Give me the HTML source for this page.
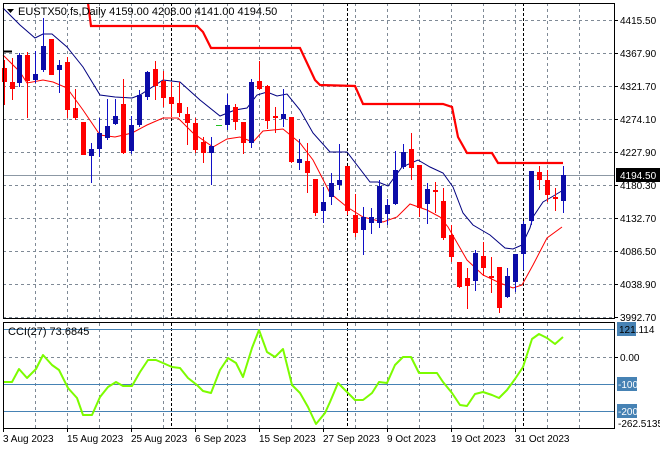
<!DOCTYPE html>
<html><head><meta charset="utf-8"><style>
html,body{margin:0;padding:0;background:#fff;width:660px;height:450px;overflow:hidden}
svg{display:block;font-family:"Liberation Sans",sans-serif}
</style></head><body>
<svg width="660" height="450" viewBox="0 0 660 450" xmlns="http://www.w3.org/2000/svg">
<rect width="660" height="450" fill="#fff"/>
<!-- grid -->
<g stroke="#7f8a96" stroke-width="1" stroke-dasharray="3,3" fill="none" shape-rendering="crispEdges">
<path d="M3 20.5H614M3 53.5H614M3 86.5H614M3 119.5H614M3 152.5H614M3 185.5H614M3 218.5H614M3 251.5H614M3 284.5H614M3 317.5H614M3 357.5H614"/>
<path d="M35.5 3V318M67.5 3V318M99.5 3V318M131.5 3V318M163.5 3V318M195.5 3V318M227.5 3V318M259.5 3V318M291.5 3V318M323.5 3V318M355.5 3V318M387.5 3V318M419.5 3V318M451.5 3V318M483.5 3V318M515.5 3V318M547.5 3V318M579.5 3V318"/>
<path d="M35.5 323V428M67.5 323V428M99.5 323V428M131.5 323V428M163.5 323V428M195.5 323V428M227.5 323V428M259.5 323V428M291.5 323V428M323.5 323V428M355.5 323V428M387.5 323V428M419.5 323V428M451.5 323V428M483.5 323V428M515.5 323V428M547.5 323V428M579.5 323V428"/>
</g>
<g stroke="#000" stroke-width="1" stroke-dasharray="3,2" shape-rendering="crispEdges">
<path d="M171.5 3V318M347.5 3V318M523.5 3V318M171.5 323V428M347.5 323V428M523.5 323V428"/>
</g>
<!-- current price line -->
<path d="M3 175.5H614" stroke="#8c98a4" stroke-width="1" shape-rendering="crispEdges"/>
<!-- supertrend -->
<polyline fill="none" stroke="#ff0000" stroke-width="2.2" points="88,3 91,26 197,26 203,32 211,48 300,48 315,80 320,85 355,86 363,104 443,104 452,107 458,137 467,153 492,153 498,163 563,163"/>
<!-- MAs -->
<polyline fill="none" stroke="#000080" stroke-width="1" points="3,8 20,25 35,38 43,34 52,34 67,47 83,67 100,95 115,97 132,98 140,95 163,80 180,82 200,100 220,116 235,110 247,108 257,95 267,92 277,96 287,94 300,110 313,133 330,152 337,152 347,152 370,182 378,182 388,186 402,167 418,160 430,167 443,173 453,187 463,213 473,225 490,235 505,248 513,249 522,245 530,228 533,217 543,202 550,198 560,192 563,190"/>
<polyline fill="none" stroke="#ff0000" stroke-width="1" points="3,55 20,72 27,83 43,80 53,82 67,88 83,110 100,135 115,137 132,133 147,125 163,118 178,118 193,133 213,147 227,139 240,137 253,142 263,131 283,129 300,143 313,160 330,193 347,207 363,217 383,222 397,217 410,204 427,210 440,217 448,227 467,260 483,275 500,283 513,288 522,285 533,265 547,238 562,227"/>
<path d="M3 51.5H12" stroke="#000" stroke-width="2"/>
<!-- candles -->
<g shape-rendering="crispEdges">
<g stroke="#ff0000" fill="#ff0000">
<path d="M4.5 60V105M12.5 58V100M27.5 52V118M51.5 39V75M67.5 57V118M75.5 89V120M83.5 122V155M123.5 79V154M155.5 61V100M163.5 71V107M171.5 82V117M179.5 82V117M187.5 107V145M195.5 118V153M203.5 137V163M235.5 104V130M243.5 122V154M259.5 61V90M267.5 85V129M275.5 107V133M291.5 117V163M307.5 143V193M315.5 179V216M347.5 166V215M355.5 194V237M411.5 133V180M419.5 165V217M435.5 182V213M443.5 188V240M451.5 225V262M459.5 262V288M467.5 268V309M483.5 242V276M491.5 257V293M499.5 267V313M539.5 166V190M547.5 170V202M555.5 188V211"/>
</g>
<g fill="#ff0000">
<rect x="2" y="68" width="5" height="14"/><rect x="10" y="82" width="5" height="7"/><rect x="25" y="55" width="5" height="26"/><rect x="49" y="39" width="5" height="36"/><rect x="65" y="62" width="5" height="48"/><rect x="73" y="108" width="5" height="10"/><rect x="81" y="122" width="5" height="33"/><rect x="121" y="104" width="5" height="49"/><rect x="153" y="69" width="5" height="17"/><rect x="161" y="81" width="5" height="17"/><rect x="169" y="97" width="5" height="7"/><rect x="177" y="103" width="5" height="10"/><rect x="185" y="114" width="5" height="9"/><rect x="193" y="123" width="5" height="27"/><rect x="201" y="142" width="5" height="11"/><rect x="233" y="107" width="5" height="15"/><rect x="241" y="122" width="5" height="21"/><rect x="257" y="81" width="5" height="8"/><rect x="265" y="86" width="5" height="35"/><rect x="273" y="116" width="5" height="2"/><rect x="289" y="117" width="5" height="45"/><rect x="305" y="161" width="5" height="12"/><rect x="313" y="179" width="5" height="34"/><rect x="345" y="166" width="5" height="45"/><rect x="353" y="215" width="5" height="18"/><rect x="409" y="149" width="5" height="19"/><rect x="417" y="165" width="5" height="43"/><rect x="433" y="190" width="5" height="2"/><rect x="441" y="201" width="5" height="37"/><rect x="449" y="235" width="5" height="22"/><rect x="457" y="262" width="5" height="25"/><rect x="465" y="278" width="5" height="8"/><rect x="481" y="256" width="5" height="12"/><rect x="489" y="276" width="5" height="2"/><rect x="497" y="267" width="5" height="41"/><rect x="537" y="172" width="5" height="8"/><rect x="545" y="180" width="5" height="15"/><rect x="553" y="197" width="5" height="2"/>
</g>
<g stroke="#1010c8">
<path d="M19.5 53V87M35.5 51V83M43.5 18V72M59.5 60V93M91.5 143V183M99.5 118V157M107.5 99V140M115.5 99V125M131.5 116V154M139.5 90V127M147.5 71V100M211.5 137V185M227.5 94V130M251.5 79V148M283.5 89V127M299.5 139V170M323.5 187V223M331.5 173V205M339.5 144V190M363.5 207V255M371.5 208V234M379.5 180V228M387.5 199V225M395.5 151V205M403.5 144V169M427.5 183V224M475.5 250V291M507.5 268V298M515.5 254V292M523.5 221V270M531.5 171V225M563.5 166V213"/>
</g>
<g fill="#0c0ca8">
<rect x="17" y="55" width="5" height="28"/><rect x="33" y="74" width="5" height="6"/><rect x="41" y="46" width="5" height="24"/><rect x="57" y="65" width="5" height="5"/><rect x="89" y="149" width="5" height="7"/><rect x="97" y="133" width="5" height="16"/><rect x="105" y="126" width="5" height="12"/><rect x="113" y="116" width="5" height="8"/><rect x="129" y="125" width="5" height="26"/><rect x="137" y="95" width="5" height="30"/><rect x="145" y="72" width="5" height="25"/><rect x="209" y="146" width="5" height="7"/><rect x="225" y="105" width="5" height="20"/><rect x="249" y="82" width="5" height="61"/><rect x="281" y="114" width="5" height="5"/><rect x="297" y="159" width="5" height="4"/><rect x="321" y="202" width="5" height="9"/><rect x="329" y="183" width="5" height="14"/><rect x="337" y="180" width="5" height="5"/><rect x="361" y="217" width="5" height="13"/><rect x="369" y="217" width="5" height="6"/><rect x="377" y="186" width="5" height="37"/><rect x="385" y="205" width="5" height="9"/><rect x="393" y="170" width="5" height="34"/><rect x="401" y="152" width="5" height="15"/><rect x="425" y="189" width="5" height="15"/><rect x="473" y="253" width="5" height="28"/><rect x="505" y="276" width="5" height="21"/><rect x="513" y="254" width="5" height="28"/><rect x="521" y="224" width="5" height="30"/><rect x="529" y="171" width="5" height="50"/><rect x="561" y="175" width="5" height="26"/>
</g>
<path d="M216 125.5H222" stroke="#22c022" stroke-width="1"/>
</g>
<!-- CCI levels -->
<g stroke="#4682b4" stroke-width="1" shape-rendering="crispEdges">
<path d="M3 329.5H614M3 384.5H614M3 411.5H614"/>
</g>
<polyline fill="none" stroke="#7cfc00" stroke-width="2" stroke-linejoin="round" points="3,382 12,382 19,369 27,378 36,369 43,355 52,365 59,370 68,388 77,398 83,415 92,415 100,397 108,387 116,382 123,386 132,386 140,372 148,360 156,360 163,363 172,367 180,368 188,378 197,385 203,391 211,393 220,370 228,358 236,363 243,377 252,348 259,330 267,352 275,357 283,349 292,385 300,393 308,407 316,424 325,413 330,402 338,383 347,392 355,400 363,400 372,393 379,382 387,383 395,365 403,357 411,357 419,373 437,373 443,382 452,393 460,405 467,406 475,394 483,392 492,395 499,398 507,390 515,379 523,367 532,339 539,334 547,338 555,344 563,337"/>
<!-- frames -->
<g fill="none" stroke="#000" stroke-width="1" shape-rendering="crispEdges">
<rect x="3.5" y="3.5" width="611" height="315"/>
<rect x="3.5" y="322.5" width="611" height="106"/>
</g>
<!-- axis ticks -->
<g stroke="#000" shape-rendering="crispEdges">
<path d="M614 20.5h4M614 53.5h4M614 86.5h4M614 119.5h4M614 152.5h4M614 185.5h4M614 218.5h4M614 251.5h4M614 284.5h4M614 317.5h4M614 357.5h4"/>
<path d="M3.5 428v4M67.5 428v4M131.5 428v4M195.5 428v4M259.5 428v4M323.5 428v4M387.5 428v4M451.5 428v4M515.5 428v4"/>
</g>
<!-- header -->
<path d="M7 9h7l-3.5 4z" fill="#000"/>
<text x="18" y="15" font-size="11" fill="#000">EUSTX50.fs,Daily  4159.00 4208.00 4141.00 4194.50</text>
<text x="8" y="335" font-size="11" fill="#000">CCI(27) 73.6845</text>
<!-- price labels -->
<g font-size="10" fill="#000">
<text x="620" y="24">4415.50</text>
<text x="620" y="57">4367.90</text>
<text x="620" y="90">4321.70</text>
<text x="620" y="123">4274.10</text>
<text x="620" y="156">4227.90</text>
<text x="620" y="189">4180.30</text>
<text x="620" y="222">4132.70</text>
<text x="620" y="255">4086.50</text>
<text x="620" y="288">4038.90</text>
<text x="620" y="321">3992.70</text>
</g>
<rect x="616" y="168" width="44" height="14" fill="#000"/>
<text x="620" y="179" font-size="10" fill="#fff">4194.50</text>
<rect x="617" y="322" width="19" height="14" fill="#4682b4"/>
<text x="619" y="333" font-size="10" fill="#000">121.114</text>
<text x="620" y="361" font-size="10" fill="#000">0.00</text>
<rect x="617" y="377" width="20" height="14" fill="#4682b4"/>
<text x="618" y="388" font-size="10" fill="#fff">-100</text>
<rect x="617" y="404" width="20" height="14" fill="#4682b4"/>
<text x="618" y="415" font-size="10" fill="#fff">-200</text>
<text x="618" y="427" font-size="10" fill="#000">-262.5135</text>
<!-- dates -->
<g font-size="10" fill="#000">
<text x="3" y="442">3 Aug 2023</text>
<text x="67" y="442">15 Aug 2023</text>
<text x="131" y="442">25 Aug 2023</text>
<text x="195" y="442">6 Sep 2023</text>
<text x="259" y="442">15 Sep 2023</text>
<text x="323" y="442">27 Sep 2023</text>
<text x="387" y="442">9 Oct 2023</text>
<text x="451" y="442">19 Oct 2023</text>
<text x="515" y="442">31 Oct 2023</text>
</g>
</svg>
</body></html>
